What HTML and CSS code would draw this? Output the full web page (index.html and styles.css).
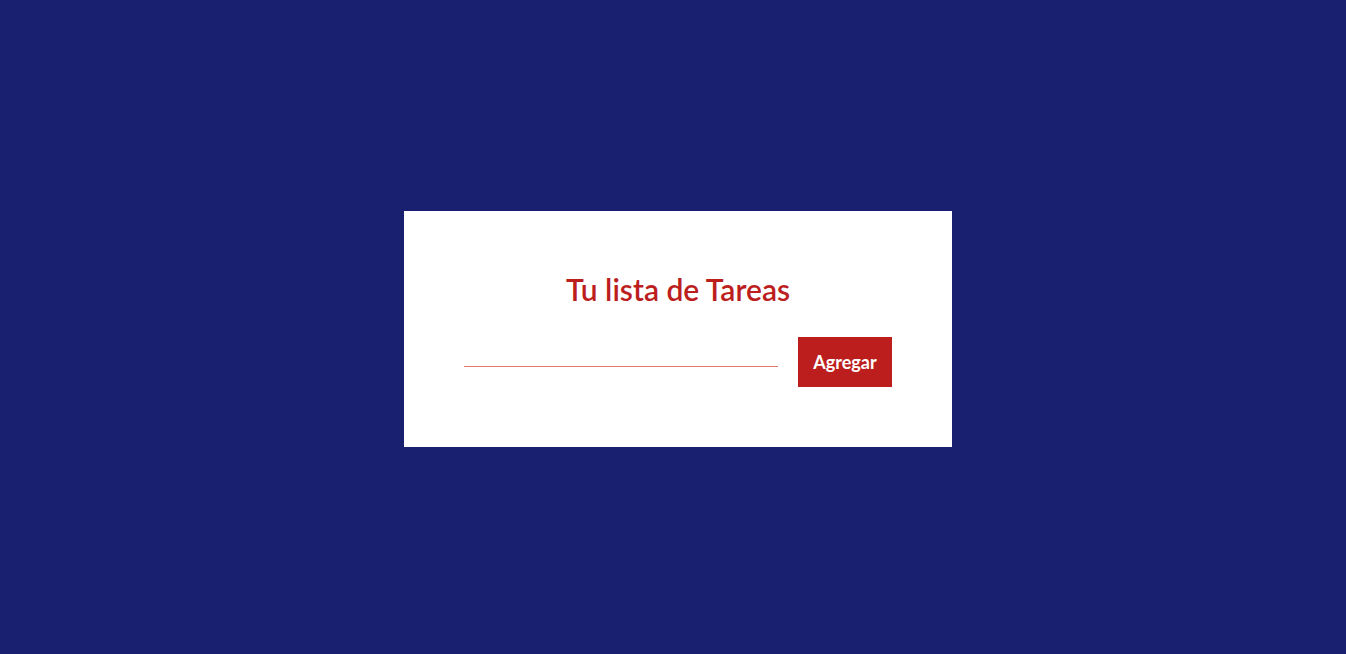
FILE: index.html
```html
<!DOCTYPE html>
<html lang="es">
<head>
<meta charset="utf-8">
<meta name="viewport" content="width=device-width, initial-scale=1">
<title>Tu lista de Tareas</title>
<link rel="stylesheet" href="styles.css">
</head>
<body>
<main class="card">
  <h1 class="title">Tu lista de Tareas</h1>
  <form class="task-form">
    <input class="task-input" type="text" aria-label="Nueva tarea">
    <button class="add-button" type="submit">Agregar</button>
  </form>
</main>
</body>
</html>
```
FILE: styles.css
```css
* {
  box-sizing: border-box;
}

body {
  margin: 0;
  min-height: 100vh;
  padding: 4px 0 0 10px;
  display: flex;
  align-items: center;
  justify-content: center;
  background: #1a2070;
  font-family: Lato, sans-serif;
}

.card {
  width: 100%;
  max-width: 548px;
  padding: 60px;
  background: #fff;
}

.title {
  margin: 0 0 30px;
  color: #bc1e1e;
  font-size: 30px;
  line-height: 36px;
  font-weight: 600;
  text-align: center;
}

.task-form {
  display: flex;
  align-items: flex-start;
  gap: 20px;
}

.task-input {
  flex: 1;
  min-width: 0;
  height: 30px;
  padding: 0;
  border: 0;
  border-bottom: 1px solid #e07a6e;
  background: transparent;
  color: #bc1e1e;
  font: inherit;
  font-size: 18px;
  outline: none;
}

.add-button {
  min-width: 94px;
  height: 50px;
  padding: 0 14px;
  border: 0;
  background: #bc1e1e;
  color: #fff;
  font-family: inherit;
  font-size: 18px;
  font-weight: 700;
  cursor: pointer;
}
```
